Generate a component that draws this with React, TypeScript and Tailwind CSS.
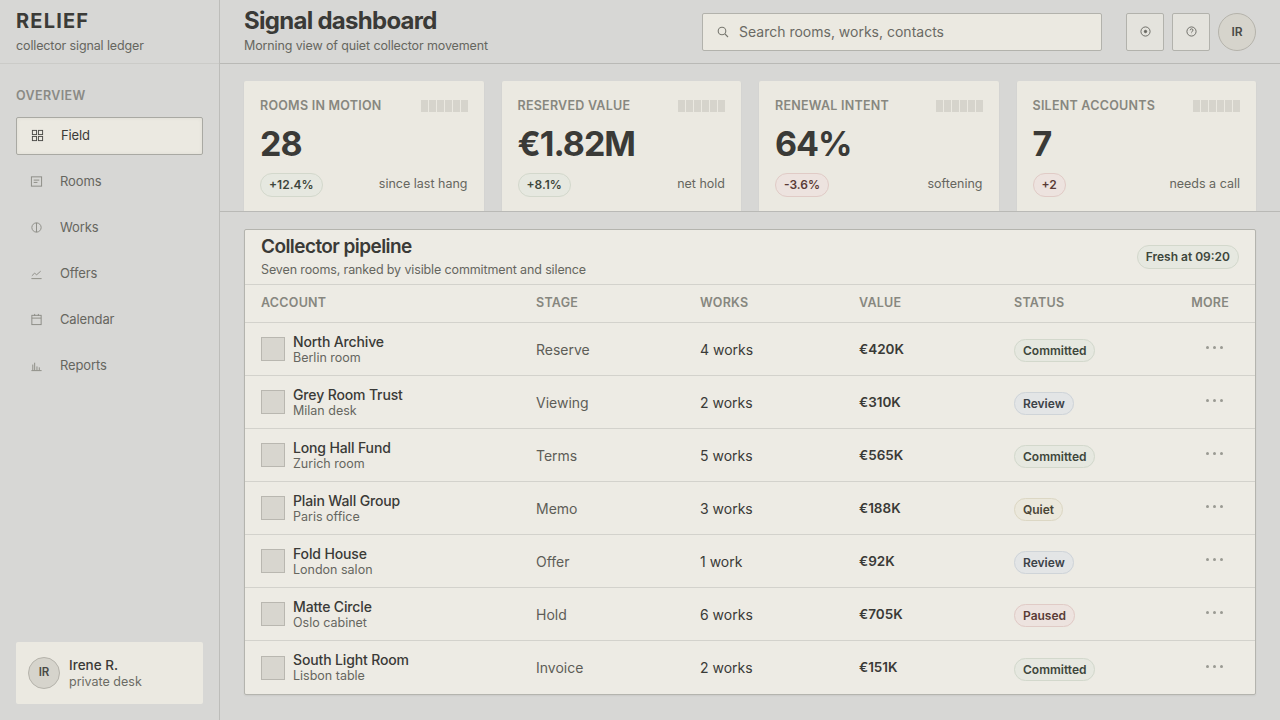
import React from "react";

const nav = [
  { label: "Field", icon: "grid" },
  { label: "Rooms", icon: "list" },
  { label: "Works", icon: "circle" },
  { label: "Offers", icon: "chart" },
  { label: "Calendar", icon: "cal" },
  { label: "Reports", icon: "bars" },
];

const NavIcon = ({ kind }: { kind: string }) => {
  const p = { width: 13, height: 13, viewBox: "0 0 14 14", fill: "none", stroke: "currentColor", strokeWidth: 1 };
  if (kind === "grid")
    return (
      <svg {...p}>
        <rect x="1.5" y="1.5" width="4.5" height="4.5" />
        <rect x="8" y="1.5" width="4.5" height="4.5" />
        <rect x="1.5" y="8" width="4.5" height="4.5" />
        <rect x="8" y="8" width="4.5" height="4.5" />
      </svg>
    );
  if (kind === "list")
    return (
      <svg {...p}>
        <rect x="1.5" y="2" width="11" height="10" />
        <path d="M4 5.5h6M4 8h4" />
      </svg>
    );
  if (kind === "circle")
    return (
      <svg {...p}>
        <circle cx="7" cy="7" r="5" />
        <path d="M7 2v10" />
      </svg>
    );
  if (kind === "chart")
    return (
      <svg {...p}>
        <path d="M1.5 12.5h11M2 9.5l3-3 2 2 4.5-4" />
      </svg>
    );
  if (kind === "cal")
    return (
      <svg {...p}>
        <rect x="2" y="2.5" width="10" height="10" />
        <path d="M2 5.5h10M5 1v2M9 1v2" />
      </svg>
    );
  return (
    <svg {...p}>
      <path d="M1.5 12.5h11M3 12V6M5 12V4M7.5 12V8M10 12V9" />
    </svg>
  );
};

const stats = [
  { label: "ROOMS IN MOTION", value: "28", delta: "+12.4%", note: "since last hang", tone: "green" },
  { label: "RESERVED VALUE", value: "€1.82M", delta: "+8.1%", note: "net hold", tone: "green" },
  { label: "RENEWAL INTENT", value: "64%", delta: "-3.6%", note: "softening", tone: "red" },
  { label: "SILENT ACCOUNTS", value: "7", delta: "+2", note: "needs a call", tone: "red" },
];

const rows = [
  ["North Archive", "Berlin room", "Reserve", "4 works", "€420K", "Committed"],
  ["Grey Room Trust", "Milan desk", "Viewing", "2 works", "€310K", "Review"],
  ["Long Hall Fund", "Zurich room", "Terms", "5 works", "€565K", "Committed"],
  ["Plain Wall Group", "Paris office", "Memo", "3 works", "€188K", "Quiet"],
  ["Fold House", "London salon", "Offer", "1 work", "€92K", "Review"],
  ["Matte Circle", "Oslo cabinet", "Hold", "6 works", "€705K", "Paused"],
  ["South Light Room", "Lisbon table", "Invoice", "2 works", "€151K", "Committed"],
];

const statusCls: Record<string, string> = {
  Committed: "bg-[#e6e8e0] border-[#d3d8cc] text-[#3d463b]",
  Review: "bg-[#e3e5e6] border-[#cfd4d8] text-[#3c4248]",
  Quiet: "bg-[#ebe8dc] border-[#dcd7c4] text-[#4a4636]",
  Paused: "bg-[#ede3df] border-[#e0cbc6] text-[#5a3b36]",
};

export default function App() {
  return (
    <div
      className="flex h-[720px] w-[1280px] overflow-hidden bg-[#d7d7d5] text-[#3a3a37]"
      style={{ fontFamily: "Inter, 'Liberation Sans', sans-serif" }}
    >
      <aside className="flex w-[220px] shrink-0 flex-col border-r border-[#bdbdba]">
        <div className="h-[64px] border-b border-[#cbcbc8] px-4 pt-[10px]">
          <div className="text-[20px] font-bold leading-[22px] tracking-[0.06em] text-[#3b3b38]">RELIEF</div>
          <div className="mt-[5px] text-[12.5px] tracking-[-0.01em] text-[#66665f]">collector signal ledger</div>
        </div>
        <div className="px-4 pt-[23px]">
          <div className="mb-[11px] text-[12.5px] font-semibold tracking-[0.03em] text-[#8a8a85]">OVERVIEW</div>
          <div className="flex flex-col gap-[8px]">
            {nav.map((n, i) => (
              <div
                key={n.label}
                className={`flex h-[38px] items-center gap-[17px] rounded-[2px] px-[14px] text-[13px] tracking-[-0.01em] ${
                  i === 0
                    ? "border border-[#a9a9a3] bg-[#ebe9e1] text-[#3a3a37] shadow-[inset_0_0_4px_rgba(0,0,0,0.05)]"
                    : "text-[#66665f]"
                }`}
              >
                <span className={i === 0 ? "text-[#4a4a46]" : "text-[#8a8a84]"}>
                  <NavIcon kind={n.icon} />
                </span>
                {n.label}
              </div>
            ))}
          </div>
        </div>
        <div className="mt-auto mb-[16px] mx-4 flex h-[62px] items-center gap-[9px] rounded-[2px] bg-[#ebe9e1] px-[12px]">
          <div className="flex h-[32px] w-[32px] items-center justify-center rounded-full border border-[#b5b3ab] bg-[#d6d4cc] text-[11.5px] font-semibold text-[#4a4a46]">
            IR
          </div>
          <div>
            <div className="text-[13.5px] font-medium leading-[16px] text-[#3a3a37]">Irene R.</div>
            <div className="text-[12.5px] leading-[17px] text-[#6b6b64]">private desk</div>
          </div>
        </div>
      </aside>

      <main className="flex min-w-0 flex-1 flex-col">
        <header className="flex h-[64px] shrink-0 items-center border-b border-[#b9b9b6] pl-[24px] pr-[24px]">
          <div>
            <h1 className="text-[24px] font-bold leading-[26px] tracking-[-0.03em] text-[#3a3a37]">Signal dashboard</h1>
            <div className="mt-[3px] text-[12.5px] tracking-[-0.01em] text-[#66665f]">Morning view of quiet collector movement</div>
          </div>
          <div className="ml-auto flex items-center">
            <div className="flex h-[38px] w-[400px] items-center gap-[10px] rounded-[2px] border border-[#b2b2ac] bg-[#ebe9e1] px-[14px] text-[14px] text-[#6a6a64]">
              <svg width="12" height="12" viewBox="0 0 12 12" fill="none" stroke="#77776f" strokeWidth="1.1">
                <circle cx="5" cy="5" r="3.8" />
                <path d="M8 8l3 3" />
              </svg>
              Search rooms, works, contacts
            </div>
            <button className="ml-[24px] flex h-[38px] w-[38px] items-center justify-center rounded-[2px] border border-[#b2b2ac] bg-[#e4e3dd] text-[#66665f]">
              <svg width="11" height="11" viewBox="0 0 12 12" fill="none" stroke="currentColor" strokeWidth="1">
                <circle cx="6" cy="6" r="5" />
                <circle cx="6" cy="6" r="1.3" fill="currentColor" />
              </svg>
            </button>
            <button className="ml-[8px] flex h-[38px] w-[38px] items-center justify-center rounded-[2px] border border-[#b2b2ac] bg-[#e4e3dd] text-[#66665f]">
              <svg width="11" height="11" viewBox="0 0 12 12" fill="none" stroke="currentColor" strokeWidth="1">
                <circle cx="6" cy="6" r="5" />
                <path d="M4.6 4.6a1.5 1.5 0 1 1 2 1.4c-.5.2-.6.5-.6 1M6 8.6v.2" />
              </svg>
            </button>
            <div className="ml-[8px] flex h-[38px] w-[38px] items-center justify-center rounded-full border border-[#b5b3ab] bg-[#d6d4cc] text-[12px] font-semibold text-[#4a4a46]">
              IR
            </div>
          </div>
        </header>

        <div className="flex h-[148px] shrink-0 items-start gap-[18px] overflow-hidden border-b border-[#b9b9b6] px-[24px] pt-[17px]">
          {stats.map((s) => (
            <div key={s.label} className="h-[140px] flex-1 rounded-[2px] bg-[#ebe9e1] px-[16px] pt-[16px] shadow-[0_1px_2px_rgba(0,0,0,0.06)]">
              <div className="flex items-center justify-between">
                <span className="text-[12.5px] font-semibold tracking-[0.02em] text-[#87877f]">{s.label}</span>
                <span className="flex gap-[1px]">
                  {[0, 1, 2, 3, 4, 5].map((k) => (
                    <span key={k} className="h-[12px] w-[7px] bg-[#d6d4cc]" />
                  ))}
                </span>
              </div>
              <div className="mt-[6px] text-[34px] font-bold leading-[44px] tracking-[-0.03em] text-[#3a3a37]">{s.value}</div>
              <div className="mt-[7px] flex items-center justify-between">
                <span
                  className={`rounded-full border px-[8px] py-[2px] text-[12px] font-semibold ${
                    s.tone === "green" ? "border-[#d3d8cc] bg-[#e6e8e0] text-[#3d463b]" : "border-[#e0cbc6] bg-[#ede3df] text-[#5a3b36]"
                  }`}
                >
                  {s.delta}
                </span>
                <span className="text-[12.5px] text-[#66665f]">{s.note}</span>
              </div>
            </div>
          ))}
        </div>

        <div className="px-[24px] pt-[17px]">
          <div className="rounded-[2px] border border-[#b4b4ae] bg-[#edebe4] shadow-[0_1px_2px_rgba(0,0,0,0.06)]">
            <div className="flex h-[55px] items-start justify-between border-b border-[#d3d2cc] px-[16px] pt-[5px]">
              <div>
                <div className="text-[19px] font-semibold leading-[24px] tracking-[-0.03em] text-[#3a3a37]">Collector pipeline</div>
                <div className="mt-[2px] text-[12.5px] tracking-[-0.01em] text-[#66665f]">Seven rooms, ranked by visible commitment and silence</div>
              </div>
              <span className="mt-[10px] rounded-full border border-[#d3d8cc] bg-[#e6e8e0] px-[8px] py-[2px] text-[12px] font-semibold text-[#3d463b]">
                Fresh at 09:20
              </span>
            </div>
            <div className="grid h-[38px] grid-cols-[275px_164px_159px_155px_1fr_80px] items-center border-b border-[#d3d2cc] pl-[16px] pr-[26px] text-[12.5px] font-semibold tracking-[0.02em] text-[#87877f]">
              <span>ACCOUNT</span>
              <span>STAGE</span>
              <span>WORKS</span>
              <span>VALUE</span>
              <span>STATUS</span>
              <span className="text-right">MORE</span>
            </div>
            {rows.map((r, i) => (
              <div
                key={r[0]}
                className={`grid h-[53px] grid-cols-[275px_164px_159px_155px_1fr_80px] items-center pl-[16px] pr-[26px] ${
                  i < rows.length - 1 ? "border-b border-[#d3d2cc]" : ""
                }`}
              >
                <div className="flex items-center gap-[8px]">
                  <span className="h-[24px] w-[24px] border border-[#b9b7b0] bg-[#d8d6cf]" />
                  <div>
                    <div className="text-[14px] font-medium leading-[17px] tracking-[-0.01em] text-[#3a3a37]">{r[0]}</div>
                    <div className="text-[12.5px] leading-[16px] text-[#66665f]">{r[1]}</div>
                  </div>
                </div>
                <span className="text-[14px] text-[#5d5d57]">{r[2]}</span>
                <span className="text-[14px] text-[#3a3a37]">{r[3]}</span>
                <span className="text-[13.5px] font-semibold text-[#3a3a37]">{r[4]}</span>
                <span>
                  <span className={`rounded-full border px-[8px] py-[3px] text-[12px] font-semibold ${statusCls[r[5]]}`}>{r[5]}</span>
                </span>
                <span className="flex justify-end gap-[4px] pr-[6px] pb-[3px]">
                  {[0, 1, 2].map((k) => (
                    <span key={k} className="h-[3px] w-[3px] rounded-full bg-[#9a9a93]" />
                  ))}
                </span>
              </div>
            ))}
          </div>
        </div>
      </main>
    </div>
  );
}
